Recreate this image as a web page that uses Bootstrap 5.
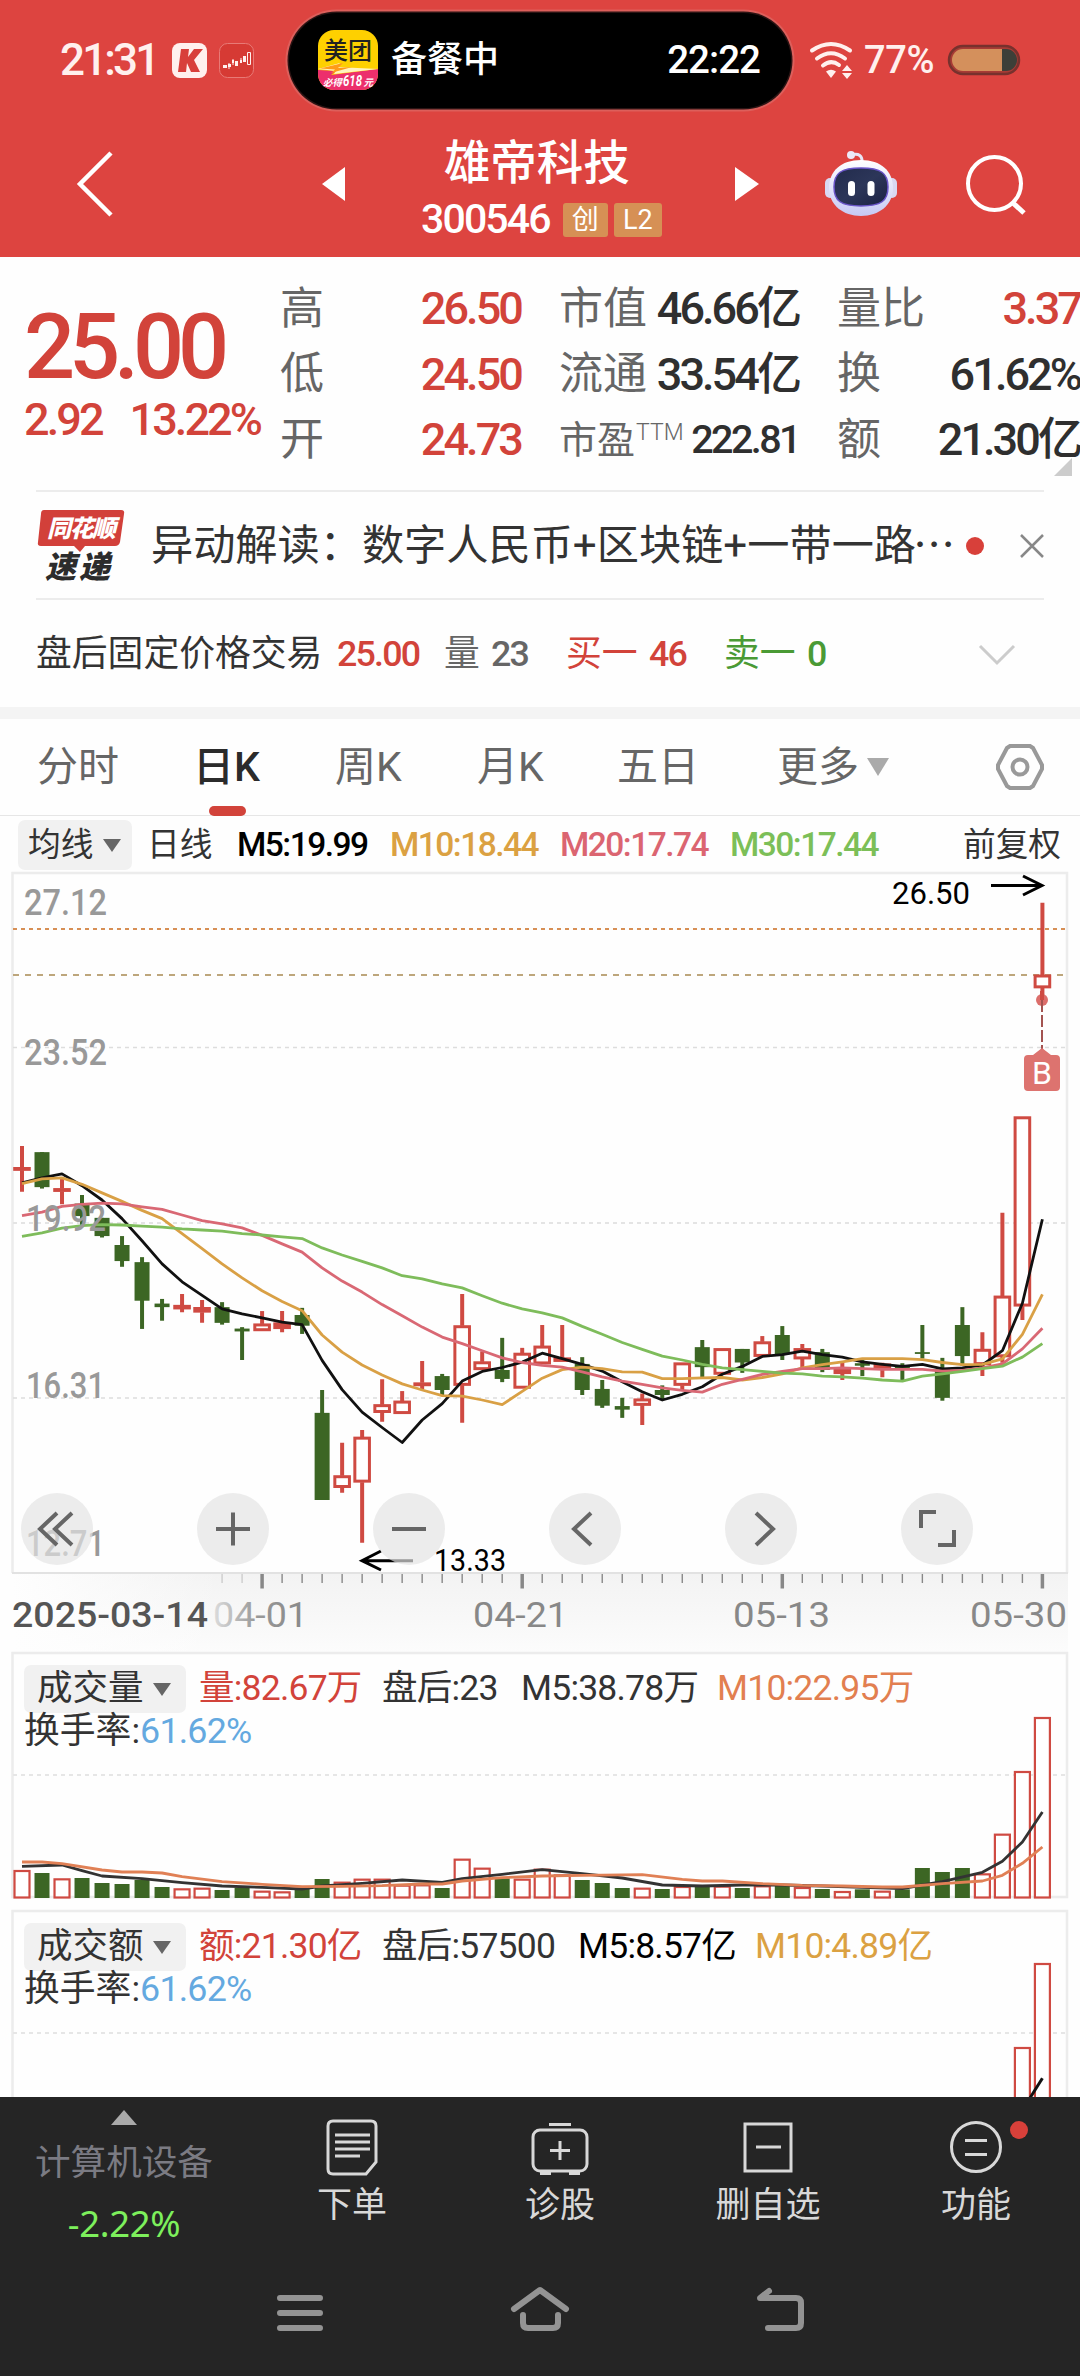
<!DOCTYPE html>
<html lang="zh-CN">
<head>
<meta charset="utf-8">
<meta name="viewport" content="width=device-width, initial-scale=1">
<title>雄帝科技 300546</title>
<link href="https://cdn.jsdelivr.net/npm/bootstrap@5.3.0/dist/css/bootstrap.min.css" rel="stylesheet">
<style>
:root{--up:#d2433a;--ink:#333;--soft:#666}
body{width:1080px;height:2376px;overflow:hidden;background:#fefefe;color:var(--ink);font-family:Roboto,"Noto Sans CJK SC",sans-serif;font-size:36px;line-height:1;white-space:nowrap}
svg{display:block;flex:none;overflow:visible}
.grid-row{display:grid;align-items:center;justify-items:start}
.num{letter-spacing:-.05em;font-weight:500}
.up{color:var(--up)}.down{color:#4a9a35}.soft{color:var(--soft)}.text-ink{color:#2f2f2f}
.ma10{color:#dba142}.ma20{color:#db6571}.ma30{color:#7cbf58}.volma{color:#e27f50}.blue{color:#64a9e0}
.top-area{background:#dd4440;height:257px;color:#fff}
.status-row{height:120px;grid-template-columns:60px 112px 47px 70px 502px 18px 55px 84px 1fr;color:#fff0ee}
.clock{font-size:44px;letter-spacing:-.065em;font-weight:500}
.batt-pct{font-size:38px;letter-spacing:-.01em;font-weight:500}
.island{width:502px;height:95px;border-radius:48px;background:#000;color:#fff;box-shadow:0 0 0 1.5px #2b1414,0 0 0 3.5px #dd5f5b;padding:0 31px 0 29px}
.island-txt{font-size:36px;font-weight:500;margin-left:13px}
.island-time{font-size:38.5px;font-weight:500;letter-spacing:-.025em}
.title-row{height:128px;grid-template-columns:76px 246px 90px 323px 90px 141px 1fr}
.stock-name{font-size:46.5px;font-weight:500;height:55px;line-height:55px;margin-top:8px}
.stock-sub{margin-top:8px;padding-left:9px}
.stock-code{font-size:41px;letter-spacing:-.045em;margin-right:13px;font-weight:500}
.tagbox{background:#d69055;border-radius:3px;height:34px;line-height:34px;font-size:27px;text-align:center;width:45px}
.tagbox+.tagbox{margin-left:6px;width:48px}
.quote{height:233px;grid-template-columns:280px 241px 38px 240px 38px 243px}
.price{font-size:90px;font-weight:500;letter-spacing:-.068em;line-height:90px}
.delta{font-size:45px;line-height:50px;margin-top:2px}
.delta.num{letter-spacing:-.065em}
.q-col{height:100%;width:100%;padding-top:19px;font-size:44px}
.q-line{height:65.5px}
.q-col .num{font-size:45px;letter-spacing:-.065em}
.q-col .pe{font-size:38px}.ttm{font-size:23px;font-weight:300;line-height:24px;margin-left:1px}
.q-col .pe-num{font-size:39.5px}
.fold{position:absolute;left:1054px;top:201px}
.rule{height:2px;background:#ececec;margin:0 36px}
.news-row{height:106px;grid-template-columns:37px 114px 815px 54px 1fr;font-size:42.2px;padding-top:2px}
.dots{display:inline-block;margin-left:-3px}
.fixed-row{height:107px;grid-template-columns:36px 301px 107px 47px 75px 83px 75px 83px 172px 1fr;font-size:35.8px;padding-top:3px}
.strip{height:12px;background:#f4f4f4}.tabline{height:1px;background:#e6e6e6}
.tabs-row{height:96px;grid-template-columns:37px 156px 142px 142px 140px 160px 219px 1fr;font-size:41px;color:var(--soft)}
.tab-on{color:#2b2b2b;font-weight:500;position:relative}
.tab-on::after{content:"";position:absolute;left:16px;top:59px;width:37px;height:10px;border-radius:5px;background:var(--up)}
.ma-row{height:56px;grid-template-columns:18px 129px 90px 153px 170px 170px 233px 1fr;font-size:32.7px;padding-top:2px}
.ma-row .num{font-size:33.5px;letter-spacing:-.045em}
.pick{background:#f1f1f1;border-radius:7px;height:50px;width:114px;padding:0 11px 0 10px}
.tri{width:0;height:0;border:9px solid transparent;border-top:13px solid #666;border-bottom:0}
.price-chart{height:781px}
.ctl-row{position:absolute;left:21px;top:621px;gap:104px}
.ctl{width:72px;height:72px;border-radius:50%;border:0;padding:0;background:rgba(227,227,227,.68)}
.panel{height:258px}
.panel-head{position:absolute;left:24px;top:11px}
.ind-row{height:50px;grid-template-columns:175px 183px 139px 196px 1fr;font-size:35.5px}
.ind-row.second{grid-template-columns:175px 183px 196px 177px 1fr}
.ind-row .num,.rate .num{letter-spacing:-.022em;font-weight:400}
.ind-row .pick{width:162px;height:48px;padding:0 15px 0 13px}
.rate{font-size:35.8px;height:34px;line-height:34px}
.bottom{position:absolute;left:0;top:2097px;width:1080px;height:279px;background:#252525;color:#d8d8d8}
.tool{width:208px;height:150px;font-size:35px}
.tool svg{margin-top:20px}
.tool-txt{margin-top:7px;height:44px;line-height:44px}
.sector{width:248px;height:150px;color:#7b7b83;font-size:35.6px;padding-top:13px}
.sector-name{margin-top:19px;height:38px;line-height:38px}
.chg{margin-top:20px;height:42px;line-height:42px;color:#7df05c;font-family:"Noto Sans",sans-serif;font-size:36.5px;letter-spacing:-.01em}
.ptr{width:0;height:0;border:13.5px solid transparent;border-bottom:15px solid #aaa;border-top:0}
.axis{font-size:36px;fill:#999;font-weight:500}
.day{font-size:35px;fill:#888;font-weight:400}
</style>
</head>
<body class="position-relative">
<header class="top-area">
  <div class="grid-row status-row">
    <i></i><span class="clock">21:31</span>
    <svg width="35" height="35"><rect width="35" height="35" rx="8" fill="#fff0ee"/><path d="M9 6H17L16 14 22 6H31L22 17 28 29H19L15 20 14 29H6z" fill="#d83f3b"/></svg>
    <svg width="35" height="35"><rect x=".5" y=".5" width="34" height="34" rx="8" fill="#d63a34" stroke="#e87a76"/><g fill="#fff0ee"><path d="M4 22h4v3H4zM16 18h3v5h-3zM24 13h3v6h-3z"/><path d="M10 20v6M14 16v6M22 15v5" stroke="#fff0ee"/><path d="M9 21h3v3H9zM13 17h2v3h-2zM21 17h2v3h-2z"/><path d="M28.500 9.500h3v12h-3z" fill="none" stroke="#fff0ee"/></g></svg>
    <div class="island d-flex align-items-center">
      <svg width="60" height="60"><defs><clipPath id="mt"><rect width="60" height="60" rx="16"/></clipPath></defs><g clip-path="url(#mt)"><rect width="60" height="60" fill="#fed000"/><path d="M0 40 18 41 13 45 60 39V60H0z" fill="#ec2f6c"/><path d="M0 39 22 33 19 37 60 39 16 44 18 41z" fill="#fff3c0"/><path d="M2 38.500 25 33 20 38 34 37 13 43 17 39.500z" fill="#ff9b18"/></g><text x="6" y="29" font-size="24" font-weight="500" fill="#222" textLength="48">美团</text><text x="5" y="56" font-size="9.500" font-weight="700" fill="#fff" font-style="italic">必得</text><text x="25" y="56" font-size="14" font-weight="700" fill="#fff" font-style="italic" textLength="19" lengthAdjust="spacingAndGlyphs">618</text><text x="45.500" y="56" font-size="9.500" font-weight="700" fill="#fff" font-style="italic">元</text></svg>
      <span class="island-txt">备餐中</span><span class="island-time ms-auto">22:22</span>
    </div>
    <i></i>
    <svg width="44" height="36" fill="none" stroke="#fff0ee" stroke-width="4" stroke-linecap="round"><path d="M3 8.500Q22-4.500 41 8.500M8 16.500Q22 6 36 16.500M14 23.500Q22 17 30 23"/><path d="M17 29.500Q22 26 27 29.500L22 36z" fill="#fff0ee" stroke="none"/><path d="M38 23l5 6H33zM33 31h10l-5 6z" fill="#fff0ee" stroke="none"/></svg>
    <span class="batt-pct">77%</span>
    <svg width="72" height="30"><rect x="1" y="1" width="70" height="28" rx="14" fill="#a83b35" stroke="#77312d" stroke-width="2.500"/><path d="M54 4h4a11 11 0 0 1 0 22h-4z" fill="#3d3f38"/><path d="M54 4v22H15a11 11 0 0 1 0-22z" fill="#d4905c"/></svg>
  </div>
  <div class="grid-row title-row">
    <i></i>
    <svg width="38" height="64" fill="none" stroke="#fff" stroke-width="4.500"><path d="M35 1 4 32 35 63"/></svg>
    <svg width="23" height="34"><path d="M23 0v34L0 17z" fill="#fff"/></svg>
    <div class="text-center">
      <div class="stock-name">雄帝科技</div>
      <div class="d-flex align-items-center stock-sub"><span class="stock-code">300546</span><span class="tagbox">创</span><span class="tagbox">L2</span></div>
    </div>
    <svg width="24" height="34"><path d="M0 0v34l24-17z" fill="#fff"/></svg>
    <svg width="72" height="68"><defs><linearGradient id="rb" x2="0" y2="1"><stop stop-color="#fff"/><stop offset="1" stop-color="#c6c9f4"/></linearGradient><linearGradient id="rf" x2="1" y2="1"><stop stop-color="#222b4c"/><stop offset=".5" stop-color="#2c3659"/><stop offset="1" stop-color="#1b2142"/></linearGradient></defs><path d="M26 5q12-3 11 8" fill="none" stroke="#e8e6f6" stroke-width="3"/><circle cx="26" cy="5" r="4" fill="#eceaf8"/><rect x="0" y="28" width="10" height="20" rx="5" fill="#d9d8f2"/><rect x="62" y="28" width="10" height="20" rx="5" fill="#d9d8f2"/><path d="M36 10C56 10 68 21 68 38S54 66 36 66 4 55 4 38 16 10 36 10z" fill="url(#rb)"/><path d="M36 18C56 18 63 23 63 37S56 56 36 56 9 51 9 37 16 18 36 18z" fill="url(#rf)" stroke="#6a55c8" stroke-width="1.500"/><rect x="23" y="31" width="7" height="15" rx="3.500" fill="#fff"/><rect x="42.500" y="31" width="7" height="15" rx="3.500" fill="#fff"/></svg>
    <svg width="60" height="60" fill="none" stroke="#fff" stroke-width="4"><circle cx="28.500" cy="29.500" r="26.500"/><path d="M47 49 58 59" stroke-width="5"/></svg>
  </div>
</header>

<section class="grid-row quote position-relative">
  <div class="ps-4"><div class="price up">25.00</div><div class="delta num up d-flex"><span>2.92</span><span class="ms-4 ps-1">13.22%</span></div></div>
  <div class="q-col soft">
    <div class="q-line d-flex align-items-center justify-content-between"><span>高</span><span class="num up">26.50</span></div>
    <div class="q-line d-flex align-items-center justify-content-between"><span>低</span><span class="num up">24.50</span></div>
    <div class="q-line d-flex align-items-center justify-content-between"><span>开</span><span class="num up">24.73</span></div>
  </div><i></i>
  <div class="q-col soft">
    <div class="q-line d-flex align-items-center justify-content-between"><span>市值</span><span class="num text-ink">46.66亿</span></div>
    <div class="q-line d-flex align-items-center justify-content-between"><span>流通</span><span class="num text-ink">33.54亿</span></div>
    <div class="q-line d-flex align-items-center justify-content-between"><span class="pe d-flex">市盈<span class="ttm">TTM</span></span><span class="num text-ink pe-num">222.81</span></div>
  </div><i></i>
  <div class="q-col soft">
    <div class="q-line d-flex align-items-center justify-content-between"><span>量比</span><span class="num up">3.37</span></div>
    <div class="q-line d-flex align-items-center justify-content-between"><span>换</span><span class="num text-ink">61.62%</span></div>
    <div class="q-line d-flex align-items-center justify-content-between"><span>额</span><span class="num text-ink">21.30亿</span></div>
  </div>
  <svg class="fold" width="18" height="18"><path d="M18 0v18H0z" fill="#ccc"/></svg>
</section>
<div class="rule"></div>
<section class="grid-row news-row">
  <i></i>
  <svg width="89" height="74"><path d="M7 1H84q4 0 3 4L83 33q-1 4-5 4H48L43 43 37 37H4q-4 0-3-4L4 5Q4 1 7 1z" fill="#d2403a"/><text x="10" y="28" font-size="24" font-weight="900" font-style="italic" fill="#fff" textLength="69">同花顺</text><text x="8" y="69" font-size="31" font-weight="900" font-style="italic" fill="#2c2c2c" textLength="65">速递</text></svg>
  <span>异动解读：数字人民币+区块链+一带一路<span class="dots">⋯</span></span>
  <svg width="18" height="18"><circle cx="9" cy="9" r="9" fill="#d8403a"/></svg>
  <svg width="24" height="24" stroke="#888" stroke-width="2.500"><path d="M1 1 23 23M23 1 1 23"/></svg>
</section>
<div class="rule"></div>
<section class="grid-row fixed-row">
  <i></i><span>盘后固定价格交易</span><span class="num up">25.00</span><span class="soft">量</span><span class="num soft">23</span><span class="up">买一</span><span class="num up">46</span><span class="down">卖一</span><span class="num down">0</span>
  <svg width="36" height="20" fill="none" stroke="#ccc" stroke-width="3"><path d="M1 1 18 18 35 1"/></svg>
</section>
<div class="strip"></div>
<nav class="grid-row tabs-row">
  <i></i><span>分时</span><span class="tab-on">日K</span><span>周K</span><span>月K</span><span>五日</span>
  <span class="d-flex align-items-center">更多<svg class="ms-2" width="22" height="18"><path d="M0 0h22L11 18z" fill="#aaa"/></svg></span>
  <svg width="48" height="46" fill="none" stroke="#999" stroke-width="4"><path d="M14 2H34L37 4 46 21V25L37 42 34 44H14L11 42 2 25V21L11 4z"/><circle cx="24" cy="23" r="7.500"/></svg>
</nav>
<div class="tabline"></div>
<div class="grid-row ma-row">
  <i></i><div class="pick d-flex align-items-center justify-content-between"><span>均线</span><i class="tri"></i></div><span>日线</span>
  <span class="num text-black">M5:19.99</span><span class="num ma10">M10:18.44</span><span class="num ma20">M20:17.74</span><span class="num ma30">M30:17.44</span><span>前复权</span>
</div>

<section class="position-relative price-chart">
  <svg id="kline" width="1080" height="781" viewBox="0 872 1080 781"></svg>
  <div class="ctl-row d-flex">
    <button class="ctl"><svg width="72" height="72" fill="none" stroke="#666" stroke-width="4"><path d="M36 20 19 36 36 52M51 20 34 36 51 52"/></svg></button>
    <button class="ctl"><svg width="72" height="72" stroke="#666" stroke-width="4"><path d="M19 36H53M36 19.500V52.500"/></svg></button>
    <button class="ctl"><svg width="72" height="72" stroke="#666" stroke-width="4"><path d="M19 36H53"/></svg></button>
    <button class="ctl"><svg width="72" height="72" fill="none" stroke="#666" stroke-width="4"><path d="M42 20 25 36 42 52"/></svg></button>
    <button class="ctl"><svg width="72" height="72" fill="none" stroke="#666" stroke-width="4"><path d="M31 20 48 36 31 52"/></svg></button>
    <button class="ctl"><svg width="72" height="72" fill="none" stroke="#666" stroke-width="4"><path d="M20 35V19H35M53 37V52H37"/></svg></button>
  </div>
</section>
<section class="position-relative panel">
  <svg id="vol" width="1080" height="258" viewBox="0 1653 1080 258"></svg>
  <div class="panel-head">
    <div class="grid-row ind-row"><div class="pick d-flex align-items-center justify-content-between"><span>成交量</span><i class="tri"></i></div><span class="num up">量:82.67万</span><span class="num">盘后:23</span><span class="num">M5:38.78万</span><span class="num volma">M10:22.95万</span></div>
    <div class="rate">换手率:<span class="num blue">61.62%</span></div>
  </div>
</section>
<section class="position-relative panel">
  <svg id="amt" width="1080" height="258" viewBox="0 1911 1080 258"></svg>
  <div class="panel-head">
    <div class="grid-row ind-row second"><div class="pick d-flex align-items-center justify-content-between"><span>成交额</span><i class="tri"></i></div><span class="num up">额:21.30亿</span><span class="num">盘后:57500</span><span class="num text-black">M5:8.57亿</span><span class="num ma10">M10:4.89亿</span></div>
    <div class="rate">换手率:<span class="num blue">61.62%</span></div>
  </div>
</section>

<footer class="bottom">
  <div class="d-flex">
    <div class="sector d-flex flex-column align-items-center"><i class="ptr"></i><span class="sector-name">计算机设备</span><span class="chg">-2.22%</span></div>
    <div class="tool d-flex flex-column align-items-center">
      <svg width="56" height="60" fill="none" stroke="#d8d8d8" stroke-width="3"><path d="M9 4H47Q52 4 52 9V45L42 57H9Q4 57 4 52V9Q4 4 9 4z"/><path d="M11 18H46M11 25H46M11 32H46M11 39H36"/></svg><span class="tool-txt">下单</span></div>
    <div class="tool d-flex flex-column align-items-center">
      <svg width="60" height="60" fill="none" stroke="#d8d8d8" stroke-width="3"><rect x="3" y="13" width="54" height="41" rx="7"/><path d="M19 7.500H41M30 24V43M20 33.500H40"/><path d="M10 56H21M39 56H50" stroke-width="4"/></svg><span class="tool-txt">诊股</span></div>
    <div class="tool d-flex flex-column align-items-center">
      <svg width="50" height="60" fill="none" stroke="#d8d8d8" stroke-width="3"><path d="M2 7H48V54H2zM13 30H38"/></svg><span class="tool-txt">删自选</span></div>
    <div class="tool d-flex flex-column align-items-center">
      <svg width="54" height="60" fill="none" stroke="#d8d8d8" stroke-width="3"><circle cx="27" cy="30" r="24.500"/><path d="M16 23.500H38M16 37.500H38"/><circle cx="70" cy="13" r="9" fill="#d8403a" stroke="none"/></svg><span class="tool-txt">功能</span></div>
  </div>
  <svg class="sysnav" width="1080" height="129" fill="none" stroke="#939393" stroke-width="6" stroke-linecap="round" stroke-linejoin="round"><path d="M280 51H320M280 66H320M280 81H320"/><path d="M514 62 540 43 566 62M523 68V76Q523 81 528 81H553Q558 81 558 76V68"/><path d="M768 81H796Q801 81 801 76V56Q801 51 796 51H760L769 44"/></svg>
</footer>
<script>
const X = i => 22 + i * 20.008;
const RED = '#cf4a42', GREEN = '#3c6624';
const line = (ys, f, c, w) => `<polyline fill="none" stroke="${c}" stroke-width="${w}" stroke-linejoin="round" points="${ys.map(([i, y]) => X(i).toFixed(1) + ',' + f(y).toFixed(1)).join(' ')}"/>`;
const dash = (y, c, d, w = 2) => `<path d="M13 ${y}H1066" stroke="${c}" stroke-dasharray="${d}" stroke-width="${w}"/>`;
const txt = (x, y, w, s, cls, extra = '') => `<text x="${x}" y="${y}" textLength="${w}" lengthAdjust="spacingAndGlyphs" class="${cls}" ${extra}>${s}</text>`;

/* daily candles: colour, high, body top, body bottom, low */
const P = y => 1080 + y / 2.8;
const K = `r185 245 253 313,g202 202 300 304,r275 304 312 348,g322 346 381 412,g386 386 437 441,g437 462 507 523,g496 510 618 697,g613 626 636 674,r599 631 641 650,r616 637 650 680,g622 636 680 685,g692 696 704 784,r647 683 702 702,r647 680 696 706,g638 658 688 711,g868 932 1176 1176,r1016 1108 1141 1156,r980 1000 1126 1296,r838 909 931 957,r871 899 934 934,r787 848 856 865,g823 829 868 882,r599 688 855 960,r760 789 811 811,g722 812 837 846,r750 765 863 863,r686 745 795 795,r686 778 788 788,g776 795 868 882,g840 865 912 918,g890 913 923 946,r878 893 911 966,g855 868 882 895,r792 792 855 868,g728 748 804 832,r752 752 824 824,g753 753 791 820,r717 733 774 774,g689 714 768 784,r739 752 781 806,g753 762 812 818,r792 808 822 840,g784 793 800 829,r792 795 808 832,g793 800 812 840,g686 762 767 780,g778 810 890 898,g636 686 773 800,r706 754 797 829,r372 605 775 792,r103 103 633 672,r-496 -294 -258 -224`.split(',');
const candle = (s, i) => {
  const [h, t, b, l] = s.slice(1).split(' ').map(v => P(+v)), x = X(i);
  if (s[0] === 'g') return `<path d="M${x} ${h}V${l}" stroke="${GREEN}" stroke-width="4"/><rect x="${x - 7.5}" y="${t}" width="15" height="${b - t}" fill="${GREEN}"/>`;
  return `<path d="M${x} ${h}V${t}M${x} ${b}V${l}" stroke="${RED}" stroke-width="4"/><rect x="${x - 7.3}" y="${t + 1}" width="14.6" height="${Math.max(b - t - 2, .5)}" fill="${b - t < 6 ? RED : '#fff'}" stroke="${RED}" stroke-width="3"/>`;
};
const seq = s => s.split(' ').map((v, i) => [i, +v]);
const M5 = seq('288 274 263 296 336 388 450 515 565 603 641 655 666 678 685 785 867 930 973 1015 952 906 843 816 805 790 765 780 796 815 845 873 896 880 859 824 802 774 769 759 769 776 789 796 802 796 809 806 798 758 625 390');
const M10 = seq('290 277 274 292 316 340 365 388 430 472 515 554 590 620 646 714 762 798 826 851 868 884 885 896 909 872 835 811 804 808 817 818 836 836 834 833 840 833 823 806 797 789 780 780 780 783 791 797 796 781 712 600');
const M20 = seq('380 370 354 348 345 347 355 362 378 394 403 414 435 459 482 526 563 594 629 660 692 720 738 758 778 791 799 804 817 831 843 852 862 869 874 852 838 824 816 808 808 806 808 810 810 810 815 813 806 795 753 695');
const M30 = seq('438 428 415 408 405 406 409 412 417 420 423 430 434 439 444 470 490 508 526 548 557 571 582 604 625 641 652 666 690 712 735 754 773 784 796 806 811 816 821 823 829 831 835 840 843 829 823 816 808 801 776 738');
let ticks = '';
for (let i = 10; i < 52; i++) {
  const major = (i - 12) % 13 === 0;
  ticks += `<path d="M${X(i)} 1574V${major ? 1588.5 : 1583}" stroke="${i < 12 ? '#ccc' : '#888'}" stroke-width="${major ? 3.5 : 1.4}"/>`;
}
document.getElementById('kline').innerHTML = `
<defs><linearGradient id="bandx"><stop stop-color="#fefefe"/><stop offset=".35" stop-color="#fefefe" stop-opacity="0"/></linearGradient>
<linearGradient id="bandy" x2="0" y2="1"><stop stop-color="#f3f3f3"/><stop offset="1" stop-color="#fcfcfc"/></linearGradient>
<linearGradient id="fade"><stop stop-color="#ddd"/><stop offset=".45" stop-color="#999"/><stop offset="1" stop-color="#888"/></linearGradient></defs>
<rect x="13" y="1574" width="1055" height="79" fill="url(#bandy)"/><rect x="12" y="1574" width="600" height="79" fill="url(#bandx)"/>
<path d="M12.500 1573V873H1067V1573" fill="none" stroke="#ececec" stroke-width="2.500"/><path d="M12 1573H1068" stroke="#e2e2e2" stroke-width="2"/>
${dash(1047.5, '#ddd', '4 4', 1.5)}${dash(1223, '#e4e4e4', '4 4')}${dash(1398, '#ddd', '4 4', 1.5)}
${dash(929, '#d78f55', '4 4')}${dash(975, '#bda67c', '6 6')}
${K.map(candle).join('')}
${line(M5, P, '#111', 2.8)}${line(M10, P, '#d9a045', 2.8)}${line(M20, P, '#d96874', 2.8)}${line(M30, P, '#7ebc5b', 2.8)}
${txt(24, 915, 83, '27.12', 'axis')}${txt(24, 1065, 83, '23.52', 'axis')}${txt(26, 1231, 80, '19.92', 'axis')}${txt(26, 1398, 79, '16.31', 'axis')}${txt(26, 1556, 79, '12.71', 'axis')}
${txt(892, 904, 78, '26.50', 'hl', 'font-size="31"')}${txt(434, 1571, 72, '13.33', 'hl', 'font-size="31"')}
<path d="M991 885.500H1041M1023 876 1042 885.500 1023 895M413 1560.700H362M381 1551 362 1560.700 381 1570" fill="none" stroke="#000" stroke-width="3"/>
<circle cx="1042" cy="1000" r="6" fill="#dc6e6b"/><path d="M1042 991V1000" stroke="${RED}" stroke-width="4"/><path d="M1042 1000V1050" stroke="#a35350" stroke-width="2" stroke-dasharray="12 3"/>
<path d="M1042 1048l9 7h5q4 0 4 4v28q0 4-4 4h-28q-4 0-4-4v-28q0-4 4-4h5z" fill="#dd736f"/><text x="1042" y="1084" text-anchor="middle" font-size="32" fill="#fff">B</text>
${ticks}
${txt(12, 1627, 196, '2025-03-14', 'day', 'style="fill:#555;font-weight:500"')}${txt(213, 1627, 95, '04-01', 'day', 'style="fill:url(#fade)"')}${txt(473, 1627, 95, '04-21', 'day')}${txt(733, 1627, 97, '05-13', 'day')}${txt(970, 1627, 97, '05-30', 'day')}`;

/* volume and turnover panels */
const V = y => 1640 + y / 3;
const bars = 'r690 g699 r715 g714 g729 g732 g720 g741 r745 r743 g750 g743 r752 r754 g745 g717 r725 r716 r716 r734 r733 g744 r656 r683 g715 r716 r686 r703 g720 g729 g744 r743 g747 r738 g741 r737 g744 r736 g737 r741 g747 r753 g748 r752 g748 g684 g696 g684 r700 r581 r393 r231'.split(' ');
const bar = (c, i, top, base) => c === 'g' ? `<rect x="${X(i) - 7.5}" y="${top}" width="15" height="${base - top}" fill="${GREEN}"/>` : `<rect x="${X(i) - 7.5}" y="${top + 1}" width="15" height="${base - top - 1.5}" fill="#fff" stroke="${RED}" stroke-width="2.2"/>`;
const pairs = s => s.split(' ').map(p => p.split(':').map(Number));
document.getElementById('vol').innerHTML = `<path d="M12.500 1897V1653H1067V1897z" fill="#fefefe" stroke="#ececec" stroke-width="2.500"/>${dash(1775, '#e6e6e6', '4 4')}
${bars.map((b, i) => bar(b[0], i, V(+b.slice(1)), 1898)).join('')}
${line(pairs('0:679 2:675 3:692 4:708 6:716 8:728 10:738 12:742 14:747 15:738 17:730 19:720 21:727 22:716 24:703 26:689 28:701 30:714 32:735 34:738 36:735 38:735 40:738 42:742 44:746 45:735 46:725 48:697 49:664 50:606 51:516'), V, '#333', 2.8)}
${line(pairs('0:666 1:666 2:671 4:690 5:696 6:696 7:699 8:710 10:725 12:733 14:740 16:739 18:737 20:732 21:732 22:723 24:713 26:708 28:706 31:704 33:718 34:723 35:723 37:731 39:736 41:738 43:741 44:741 46:731 48:723 49:706 50:670 51:621'), V, '#e08055', 2.8)}`;
document.getElementById('amt').innerHTML = `<path d="M12.500 2160V1911H1067V2160" fill="#fefefe" stroke="#ececec" stroke-width="2.500"/>${dash(2033, '#e6e6e6', '4 4')}
${bar('r', 50, 2047, 2160)}${bar('r', 51, 1963, 2160)}${line([[50, 1410], [51, 1315]], V, '#111', 3)}`;
</script>
<script src="https://cdn.jsdelivr.net/npm/bootstrap@5.3.0/dist/js/bootstrap.bundle.min.js"></script>
</body>
</html>
